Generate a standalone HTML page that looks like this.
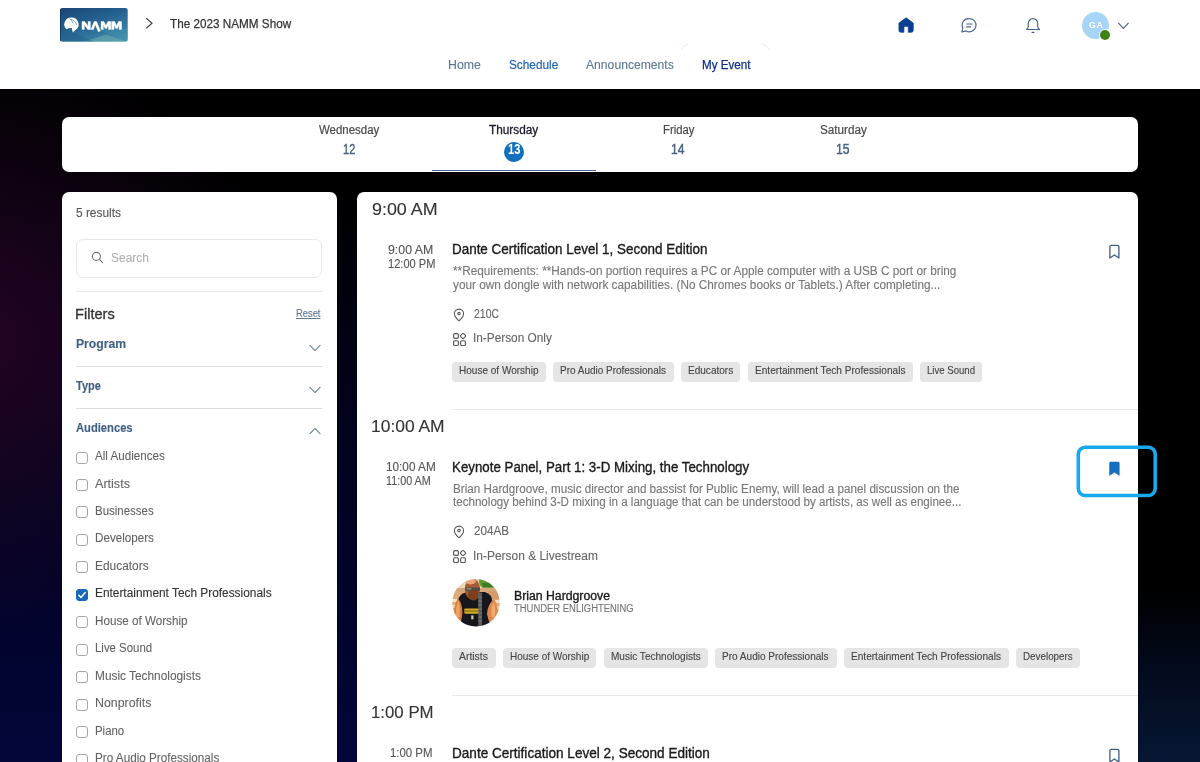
<!DOCTYPE html>
<html>
<head>
<meta charset="utf-8">
<title>The 2023 NAMM Show</title>
<style>
*{box-sizing:border-box;margin:0;padding:0}
html,body{width:1200px;height:762px;overflow:hidden}
body{font-family:"Liberation Sans",sans-serif;position:relative;background:#000;color:#333}
.abs{position:absolute}
.t{position:absolute;white-space:nowrap;line-height:1;transform-origin:0 0}
#bg{position:absolute;left:0;top:88px;width:1200px;height:674px;
 background:
  radial-gradient(ellipse 330px 300px at -40px 250px, rgba(40,4,34,0.95) 0%, rgba(30,4,34,0.6) 45%, rgba(0,0,0,0) 100%),
  linear-gradient(to bottom, rgba(3,5,60,0) 0%, rgba(3,5,60,0) 14%, rgba(3,5,60,0.5) 52%, rgba(3,5,60,0.95) 100%),
  #000;}
#bgr{position:absolute;left:1100px;top:88px;width:100px;height:674px;
 background:linear-gradient(to bottom, #000 0%, #000 74%, #030a1c 86%, #071633 100%);}
#hdr{position:absolute;left:0;top:0;width:1200px;height:89.2px;background:#fff}
.card{position:absolute;background:#fff;border-radius:7px}
.sep{position:absolute;height:1px;background:#e9e9e9}
.cb{position:absolute;left:76px;width:12px;height:12px;border:1px solid #a6a6a6;border-radius:3px;background:#fff}
.tag{position:absolute;height:20px;background:#e5e5e5;border-radius:4px}
</style>
</head>
<body>
<div id="bg"></div>
<div id="bgr"></div>

<div id="hdr"></div>
<!-- logo -->
<svg class="abs" style="left:60.1px;top:8.3px" width="68" height="34" viewBox="0 0 68 34">
  <defs>
    <linearGradient id="lg" x1="0" y1="0" x2="1" y2="0.9">
      <stop offset="0" stop-color="#1a4572"/>
      <stop offset="0.55" stop-color="#27679a"/>
      <stop offset="1" stop-color="#4593b0"/>
    </linearGradient>
    <linearGradient id="lg2" x1="0" y1="0" x2="0" y2="1">
      <stop offset="0" stop-color="#1a4572" stop-opacity="0.25"/>
      <stop offset="1" stop-color="#3f8fa8" stop-opacity="0.35"/>
    </linearGradient>
    <clipPath id="lc"><rect x="0" y="0" width="67.8" height="33.7" rx="2.6"/></clipPath>
  </defs>
  <g clip-path="url(#lc)">
  <rect x="0" y="0" width="67.8" height="33.7" fill="url(#lg)"/>
  <rect x="0" y="0" width="67.8" height="33.7" fill="url(#lg2)"/>
  <path d="M24 33.7 L46 26.5 L67.8 33.7 Z" fill="#7fb8ac" opacity="0.45"/>
  <path d="M38 22 L67.8 32 V20 Z" fill="#4a9ab8" opacity="0.25"/>
  <path d="M0 18 L34 33.7 H0 Z" fill="#1d5578" opacity="0.35"/>
  <rect x="0" y="0" width="1" height="33.7" fill="#0e2a5a" opacity="0.6"/>
  <path d="M11.7 9.4 a6.9 6.9 0 0 1 3.4 12.9 q-1.6 1.4 -2 2.4 q-1.4 -2.6 -1.2 -4.6 q-2.8 -0.6 -5.4 1.2 A6.9 6.9 0 0 1 11.7 9.4 Z" fill="#fff"/>
  <path d="M9.2 10 q3.2 2 3.6 5.4 M10.4 11.4 q4.6 0.6 6.4 5.6" stroke="#2a5f8e" stroke-width="0.5" fill="none"/>
  <g fill="#fff" stroke="#fff" stroke-width="0.45" stroke-linejoin="round">
    <path d="M22 21.4 V13.6 H24.7 L28.1 18.2 V13.6 H30.4 V21.4 H27.8 L24.3 16.8 V21.4 Z"/>
    <path d="M31 21.4 L34.1 13.6 H36.6 L40.4 22.9 L38.3 23.7 L35.2 16.5 L33.5 21.4 Z"/>
    <path d="M41.0 21.4 L41.0 13.6 L43.9 13.6 L45.9 17.7 L47.9 13.6 L50.8 13.6 L50.8 21.4 L48.5 21.4 L48.5 16.8 L46.7 20.6 L45.1 20.6 L43.3 16.8 L43.3 21.4 Z"/>
    <path d="M51.7 21.4 L51.7 13.6 L54.6 13.6 L56.6 17.7 L58.6 13.6 L61.5 13.6 L61.5 21.4 L59.2 21.4 L59.2 16.8 L57.4 20.6 L55.8 20.6 L54.0 16.8 L54.0 21.4 Z"/>
  </g>
  </g>
</svg>
<!-- chevron -->
<svg class="abs" style="left:144px;top:16px" width="10" height="14" viewBox="0 0 10 14"><path d="M2.3 2.2 L8 7.2 L2.3 12.2" stroke="#444" stroke-width="1.2" fill="none"/></svg>
<svg class="abs" style="left:678px;top:42px" width="96" height="14" viewBox="0 0 96 14"><path d="M3 8.5 Q4.5 3.5 10 2.2 M85 2.2 Q90.5 3.8 92 9" fill="none" stroke="#ff9a78" stroke-opacity="0.35" stroke-width="0.8"/></svg>
<div class="t" style="left:169.62px;top:17.0px;font-size:13px;color:#333;-webkit-text-stroke:0.25px #333;transform:scaleX(0.9018)">The 2023 NAMM Show</div>
<div class="t" style="left:448.11px;top:58.3px;font-size:13px;color:#5d7894;-webkit-text-stroke:0.12px #5d7894;transform:scaleX(0.9472)">Home</div>
<div class="t" style="left:508.70px;top:58.3px;font-size:13px;color:#1d63b8;-webkit-text-stroke:0.2px #1d63b8;transform:scaleX(0.9078)">Schedule</div>
<div class="t" style="left:585.66px;top:58.3px;font-size:13px;color:#5d7894;-webkit-text-stroke:0.12px #5d7894;transform:scaleX(0.9347)">Announcements</div>
<div class="t" style="left:701.53px;top:58.3px;font-size:13px;color:#0b2e86;-webkit-text-stroke:0.25px #0b2e86;transform:scaleX(0.8951)">My Event</div>
<!-- home icon -->
<svg class="abs" style="left:897.7px;top:17.3px" width="16.2" height="16.2" viewBox="0 0 17 17"><path d="M8.5 0.8 L1 6.4 V14 a2 2 0 0 0 2 2 H6.2 V11 a1.2 1.2 0 0 1 1.2 -1.2 h2.2 a1.2 1.2 0 0 1 1.2 1.2 V16 H14 a2 2 0 0 0 2 -2 V6.4 Z" fill="#0c3f93" stroke="#0c3f93" stroke-width="0.8" stroke-linejoin="round"/></svg>
<!-- chat icon -->
<svg class="abs" style="left:960px;top:17px" width="18" height="17" viewBox="0 0 18 17"><path d="M9.4 1.6 a6.6 6.6 0 1 1 -3.3 12.3 L1.8 15 L2.9 11.2 A6.6 6.6 0 0 1 9.4 1.6 Z" fill="none" stroke="#466488" stroke-width="1.15" stroke-linejoin="round"/><path d="M6.8 7 H12.2 M6.8 9.8 H10.4" stroke="#466488" stroke-width="1.15" stroke-linecap="round"/></svg>
<!-- bell icon -->
<svg class="abs" style="left:1024px;top:17px" width="18" height="18" viewBox="0 0 18 18"><path d="M9 1.6 a4.7 4.7 0 0 0 -4.7 4.7 v3.2 c0 1.2 -0.8 2.2 -1.8 3 h13 c-1 -0.8 -1.8 -1.8 -1.8 -3 V6.3 A4.7 4.7 0 0 0 9 1.6 Z" fill="none" stroke="#466488" stroke-width="1.15" stroke-linejoin="round"/><path d="M8.2 15.4 h1.6" stroke="#3f5f85" stroke-width="1.4" stroke-linecap="round"/></svg>
<!-- avatar -->
<div class="abs" style="left:1082.1px;top:11.6px;width:27.2px;height:27.2px;border-radius:50%;background:#a8d4f8"></div>
<div class="t" style="left:1089.3px;top:20.2px;font-size:9.4px;font-weight:bold;color:#fff;letter-spacing:0.8px;line-height:1;transform:scaleX(0.93)">GA</div>
<div class="abs" style="left:1098.5px;top:28.5px;width:13px;height:13px;border-radius:50%;background:#fff"></div>
<div class="abs" style="left:1099.85px;top:29.85px;width:10.3px;height:10.3px;border-radius:50%;background:#3f8214"></div>
<svg class="abs" style="left:1116px;top:20px" width="16" height="12" viewBox="0 0 16 12"><path d="M2.2 2.8 L7.4 8.3 L12.6 2.8" stroke="#4f6580" stroke-width="1.15" fill="none"/></svg>

<!-- date bar -->
<div class="card" style="left:62px;top:117px;width:1076px;height:54.6px;border-radius:7px"></div>
<div class="abs" style="left:503.9px;top:142px;width:20.3px;height:20.3px;border-radius:50%;background:#1270be"></div>
<div class="abs" style="left:431.7px;top:170.2px;width:164.5px;height:1.2px;background:#4a62a8"></div>
<div class="t" style="left:319.10px;top:124.1px;font-size:12px;color:#4a4a4a;-webkit-text-stroke:0.2px #4a4a4a;transform:scaleX(0.9548)">Wednesday</div>
<div class="t" style="left:342.76px;top:141.8px;font-size:14.5px;color:#4a6482;-webkit-text-stroke:0.45px #4a6482;transform:scaleX(0.7601)">12</div>
<div class="t" style="left:489.45px;top:124.2px;font-size:12px;color:#1c1c2c;-webkit-text-stroke:0.3px #1c1c2c;transform:scaleX(0.9836)">Thursday</div>
<div class="t" style="left:507.80px;top:141.6px;font-size:14.5px;color:#fff;font-weight:bold;transform:scaleX(0.7657)">13</div>
<div class="t" style="left:663.00px;top:124.1px;font-size:12px;color:#4a4a4a;-webkit-text-stroke:0.2px #4a4a4a;transform:scaleX(0.9448)">Friday</div>
<div class="t" style="left:671.39px;top:141.8px;font-size:14.5px;color:#4a6482;-webkit-text-stroke:0.45px #4a6482;transform:scaleX(0.8331)">14</div>
<div class="t" style="left:819.90px;top:124.1px;font-size:12px;color:#4a4a4a;-webkit-text-stroke:0.2px #4a4a4a;transform:scaleX(0.9765)">Saturday</div>
<div class="t" style="left:836.19px;top:141.8px;font-size:14.5px;color:#4a6482;-webkit-text-stroke:0.45px #4a6482;transform:scaleX(0.8397)">15</div>

<!-- sidebar -->
<div class="card" style="left:62px;top:192px;width:274.8px;height:600px"></div>
<div class="abs" style="left:76px;top:239px;width:246px;height:39px;border:1px solid #e8e8e8;border-radius:7px;background:#fff"></div>
<svg class="abs" style="left:90.5px;top:250.7px" width="14" height="14" viewBox="0 0 14 14"><circle cx="5.4" cy="5.4" r="4" fill="none" stroke="#707070" stroke-width="1.1"/><path d="M8.4 8.4 L11.6 11.6" stroke="#707070" stroke-width="1.1" stroke-linecap="round"/></svg>
<div class="sep" style="left:76px;top:291.2px;width:246px"></div>
<svg class="abs" style="left:308.3px;top:342.7px" width="14" height="10" viewBox="0 0 14 10"><path d="M1.6 2 L7 7.6 L12.4 2" stroke="#56708f" stroke-width="1.05" fill="none"/></svg>
<div class="sep" style="left:76px;top:365.7px;width:246px;background:#dcdcdc"></div>
<svg class="abs" style="left:308.3px;top:384.7px" width="14" height="10" viewBox="0 0 14 10"><path d="M1.6 2 L7 7.6 L12.4 2" stroke="#56708f" stroke-width="1.05" fill="none"/></svg>
<div class="sep" style="left:76px;top:407.9px;width:246px;background:#dcdcdc"></div>
<svg class="abs" style="left:308.3px;top:426px" width="14" height="10" viewBox="0 0 14 10"><path d="M1.6 8 L7 2.4 L12.4 8" stroke="#56708f" stroke-width="1.05" fill="none"/></svg>
<div class="t" style="left:76.36px;top:206.6px;font-size:12.5px;color:#555;-webkit-text-stroke:0.12px #555;transform:scaleX(0.9508)">5 results</div>
<div class="t" style="left:110.96px;top:251.0px;font-size:13px;color:#b0b0b0;-webkit-text-stroke:0.12px #b0b0b0;transform:scaleX(0.9199)">Search</div>
<div class="t" style="left:75.41px;top:306.8px;font-size:14px;color:#333;-webkit-text-stroke:0.3px #333;transform:scaleX(1.0428)">Filters</div>
<div class="t" style="left:296.16px;top:308.2px;font-size:11px;color:#5d7894;-webkit-text-stroke:0.12px #5d7894;transform:scaleX(0.8501);text-decoration:underline">Reset</div>
<div class="t" style="left:76.36px;top:338.0px;font-size:12px;color:#3f5f85;font-weight:bold;-webkit-text-stroke:0.12px #3f5f85;transform:scaleX(1.0144)">Program</div>
<div class="t" style="left:76.36px;top:380.0px;font-size:12px;color:#3f5f85;font-weight:bold;-webkit-text-stroke:0.12px #3f5f85;transform:scaleX(0.9139)">Type</div>
<div class="t" style="left:76.36px;top:422.0px;font-size:12px;color:#3f5f85;font-weight:bold;-webkit-text-stroke:0.12px #3f5f85;transform:scaleX(0.9323)">Audiences</div>
<div class="cb" style="top:451.5px"></div>
<div class="t" style="left:95.04px;top:450.0px;font-size:12px;color:#626262;-webkit-text-stroke:0.08px #626262;transform:scaleX(0.9685)">All Audiences</div>
<div class="cb" style="top:478.9px"></div>
<div class="t" style="left:95.04px;top:477.5px;font-size:12px;color:#626262;-webkit-text-stroke:0.08px #626262;transform:scaleX(1.0476)">Artists</div>
<div class="cb" style="top:506.4px"></div>
<div class="t" style="left:95.04px;top:504.9px;font-size:12px;color:#626262;-webkit-text-stroke:0.08px #626262;transform:scaleX(0.9569)">Businesses</div>
<div class="cb" style="top:533.9px"></div>
<div class="t" style="left:95.04px;top:532.4px;font-size:12px;color:#626262;-webkit-text-stroke:0.08px #626262;transform:scaleX(0.9707)">Developers</div>
<div class="cb" style="top:561.3px"></div>
<div class="t" style="left:95.04px;top:559.8px;font-size:12px;color:#626262;-webkit-text-stroke:0.08px #626262;transform:scaleX(0.9924)">Educators</div>
<div class="cb" style="top:588.8px;background:#1668b8;border-color:#1668b8"></div>
<svg class="abs" style="left:76px;top:588.8px" width="12" height="12" viewBox="0 0 12 12"><path d="M2.8 6.2 L5 8.4 L9.2 3.6" stroke="#fff" stroke-width="1.5" fill="none" stroke-linecap="round" stroke-linejoin="round"/></svg>
<div class="t" style="left:95.06px;top:587.3px;font-size:12px;color:#333;-webkit-text-stroke:0.12px #333;transform:scaleX(0.9889)">Entertainment Tech Professionals</div>
<div class="cb" style="top:616.2px"></div>
<div class="t" style="left:95.04px;top:614.7px;font-size:12px;color:#626262;-webkit-text-stroke:0.08px #626262;transform:scaleX(0.9721)">House of Worship</div>
<div class="cb" style="top:643.6px"></div>
<div class="t" style="left:95.04px;top:642.2px;font-size:12px;color:#626262;-webkit-text-stroke:0.08px #626262;transform:scaleX(0.9503)">Live Sound</div>
<div class="cb" style="top:671.1px"></div>
<div class="t" style="left:95.04px;top:669.6px;font-size:12px;color:#626262;-webkit-text-stroke:0.08px #626262;transform:scaleX(0.9883)">Music Technologists</div>
<div class="cb" style="top:698.5px"></div>
<div class="t" style="left:95.04px;top:697.1px;font-size:12px;color:#626262;-webkit-text-stroke:0.08px #626262;transform:scaleX(1.0316)">Nonprofits</div>
<div class="cb" style="top:726.0px"></div>
<div class="t" style="left:95.04px;top:724.5px;font-size:12px;color:#626262;-webkit-text-stroke:0.08px #626262;transform:scaleX(0.9517)">Piano</div>
<div class="cb" style="top:753.5px"></div>
<div class="t" style="left:95.04px;top:752.0px;font-size:12px;color:#626262;-webkit-text-stroke:0.08px #626262;transform:scaleX(0.9754)">Pro Audio Professionals</div>

<!-- main -->
<div class="card" style="left:357px;top:192px;width:780.8px;height:600px"></div>
<div class="t" style="left:371.56px;top:200.6px;font-size:17px;color:#333;-webkit-text-stroke:0.12px #333;transform:scaleX(1.0520)">9:00 AM</div>
<div class="t" style="left:388.06px;top:243.5px;font-size:12px;color:#555;-webkit-text-stroke:0.12px #555;transform:scaleX(1.0266)">9:00 AM</div>
<div class="t" style="left:387.56px;top:257.5px;font-size:12px;color:#555;-webkit-text-stroke:0.12px #555;transform:scaleX(0.9224)">12:00 PM</div>
<div class="t" style="left:451.72px;top:242.4px;font-size:14px;color:#1a1a1a;-webkit-text-stroke:0.35px #1a1a1a;transform:scaleX(0.9594)">Dante Certification Level 1, Second Edition</div>
<div class="t" style="left:452.56px;top:265.3px;font-size:12px;color:#777;-webkit-text-stroke:0.12px #777;transform:scaleX(0.9827)">**Requirements: **Hands-on portion requires a PC or Apple computer with a USB C port or bring</div>
<div class="t" style="left:452.56px;top:279.0px;font-size:12px;color:#777;-webkit-text-stroke:0.12px #777;transform:scaleX(0.9825)">your own dongle with network capabilities. (No Chromes books or Tablets.) After completing...</div>
<svg class="abs" style="left:453.1px;top:308.1px" width="12" height="14" viewBox="0 0 12 14"><path d="M6 1.1 a4.6 4.6 0 0 0 -4.6 4.6 c0 3.1 4.6 7.1 4.6 7.1 s4.6 -4 4.6 -7.1 A4.6 4.6 0 0 0 6 1.1 Z" fill="none" stroke="#555" stroke-width="1.05"/><circle cx="6" cy="5.6" r="1.25" fill="none" stroke="#555" stroke-width="1.05"/></svg>
<div class="t" style="left:473.56px;top:308.0px;font-size:12px;color:#666;-webkit-text-stroke:0.12px #666;transform:scaleX(0.8745)">210C</div>
<svg class="abs" style="left:452.7px;top:332.7px" width="14" height="14" viewBox="0 0 14 14"><rect x="0.6" y="0.6" width="4.8" height="4.8" rx="1.3" fill="none" stroke="#555" stroke-width="1.15"/><rect x="7.9" y="0.9" width="4.2" height="4.2" rx="1.2" transform="rotate(45 10 3)" fill="none" stroke="#555" stroke-width="1.1"/><rect x="0.6" y="7.7" width="4.8" height="4.8" rx="1.3" fill="none" stroke="#555" stroke-width="1.15"/><rect x="7.6" y="7.7" width="4.8" height="4.8" rx="1.3" fill="none" stroke="#555" stroke-width="1.15"/></svg>
<div class="t" style="left:472.57px;top:332.3px;font-size:12px;color:#666;-webkit-text-stroke:0.12px #666;transform:scaleX(0.9854)">In-Person Only</div>
<div class="tag" style="left:452px;top:361.7px;width:93.5px"></div>
<div class="t" style="left:459.06px;top:364.7px;font-size:11px;color:#444;-webkit-text-stroke:0.12px #444;transform:scaleX(0.9113)">House of Worship</div>
<div class="tag" style="left:552.5px;top:361.7px;width:121.0px"></div>
<div class="t" style="left:559.56px;top:364.7px;font-size:11px;color:#444;-webkit-text-stroke:0.12px #444;transform:scaleX(0.9066)">Pro Audio Professionals</div>
<div class="tag" style="left:680.7px;top:361.7px;width:59.8px"></div>
<div class="t" style="left:687.76px;top:364.7px;font-size:11px;color:#444;-webkit-text-stroke:0.12px #444;transform:scaleX(0.9131)">Educators</div>
<div class="tag" style="left:747.5px;top:361.7px;width:165.2px"></div>
<div class="t" style="left:754.56px;top:364.7px;font-size:11px;color:#444;-webkit-text-stroke:0.12px #444;transform:scaleX(0.9192)">Entertainment Tech Professionals</div>
<div class="tag" style="left:920px;top:361.7px;width:62.0px"></div>
<div class="t" style="left:927.06px;top:364.7px;font-size:11px;color:#444;-webkit-text-stroke:0.12px #444;transform:scaleX(0.8717)">Live Sound</div>
<svg class="abs" style="left:1108.4px;top:243.9px" width="14" height="16" viewBox="0 0 14 16"><path d="M3 1.4 H9.8 Q10.9 1.4 10.9 2.5 V14 L6.4 11 L1.9 14 V2.5 Q1.9 1.4 3 1.4 Z" fill="none" stroke="#3f5f85" stroke-width="1.3" stroke-linejoin="round"/></svg>
<div class="sep" style="left:452px;top:409px;width:686px"></div>
<div class="t" style="left:370.53px;top:418.1px;font-size:17px;color:#333;-webkit-text-stroke:0.12px #333;transform:scaleX(1.0252)">10:00 AM</div>
<div class="t" style="left:386.06px;top:461.0px;font-size:12px;color:#555;-webkit-text-stroke:0.12px #555;transform:scaleX(0.9808)">10:00 AM</div>
<div class="t" style="left:386.06px;top:475.0px;font-size:12px;color:#555;-webkit-text-stroke:0.12px #555;transform:scaleX(0.8990)">11:00 AM</div>
<div class="t" style="left:451.72px;top:459.7px;font-size:14px;color:#1a1a1a;-webkit-text-stroke:0.35px #1a1a1a;transform:scaleX(0.9506)">Keynote Panel, Part 1: 3-D Mixing, the Technology</div>
<div class="t" style="left:452.56px;top:482.5px;font-size:12px;color:#777;-webkit-text-stroke:0.12px #777;transform:scaleX(0.9729)">Brian Hardgroove, music director and bassist for Public Enemy, will lead a panel discussion on the</div>
<div class="t" style="left:452.56px;top:496.2px;font-size:12px;color:#777;-webkit-text-stroke:0.12px #777;transform:scaleX(0.9659)">technology behind 3-D mixing in a language that can be understood by artists, as well as enginee...</div>
<svg class="abs" style="left:453.1px;top:525.4px" width="12" height="14" viewBox="0 0 12 14"><path d="M6 1.1 a4.6 4.6 0 0 0 -4.6 4.6 c0 3.1 4.6 7.1 4.6 7.1 s4.6 -4 4.6 -7.1 A4.6 4.6 0 0 0 6 1.1 Z" fill="none" stroke="#555" stroke-width="1.05"/><circle cx="6" cy="5.6" r="1.25" fill="none" stroke="#555" stroke-width="1.05"/></svg>
<div class="t" style="left:473.56px;top:525.3px;font-size:12px;color:#666;-webkit-text-stroke:0.12px #666;transform:scaleX(0.9738)">204AB</div>
<svg class="abs" style="left:452.7px;top:550px" width="14" height="14" viewBox="0 0 14 14"><rect x="0.6" y="0.6" width="4.8" height="4.8" rx="1.3" fill="none" stroke="#555" stroke-width="1.15"/><rect x="7.9" y="0.9" width="4.2" height="4.2" rx="1.2" transform="rotate(45 10 3)" fill="none" stroke="#555" stroke-width="1.1"/><rect x="0.6" y="7.7" width="4.8" height="4.8" rx="1.3" fill="none" stroke="#555" stroke-width="1.15"/><rect x="7.6" y="7.7" width="4.8" height="4.8" rx="1.3" fill="none" stroke="#555" stroke-width="1.15"/></svg>
<div class="t" style="left:472.56px;top:549.8px;font-size:12px;color:#666;-webkit-text-stroke:0.12px #666;transform:scaleX(0.9959)">In-Person &amp; Livestream</div>
<svg class="abs" style="left:452px;top:579.3px" width="48" height="48" viewBox="0 0 48 48">
<defs><clipPath id="av"><circle cx="24" cy="23.8" r="23.8"/></clipPath>
<filter id="bl" x="-10%" y="-10%" width="120%" height="120%"><feGaussianBlur stdDeviation="0.65"/></filter></defs>
<g clip-path="url(#av)"><g filter="url(#bl)">
<rect x="-4" y="-4" width="56" height="56" fill="#e0ac7c"/>
<rect x="-4" y="-4" width="56" height="13" fill="#ecd8ba"/>
<rect x="-4" y="9" width="56" height="4" fill="#d9a77c"/>
<path d="M27 -2 H50 V8.5 H30 Q27 6 27 3 Z" fill="#5f9a34"/>
<path d="M30 4 H44 V8.5 H31 Z" fill="#3f7a24"/>
<rect x="-2" y="20" width="9" height="3" fill="#f6e4c8"/><rect x="-2" y="26" width="8" height="3" fill="#f2d8b4"/>
<rect x="41" y="21" width="9" height="3" fill="#f4dcc0"/><rect x="41" y="27" width="9" height="3" fill="#f0d0a8"/>
<rect x="36" y="12" width="12" height="8" fill="#d49a6c"/>
<path d="M6 50 V22 Q7 14.5 15 13 H33 Q40 15 40.5 23 V50 Z" fill="#17191c"/>
<path d="M2.2 43 Q0.6 29 5.6 19.5 Q10.2 23 10.4 34 Q9.6 43 6.6 48 Z" fill="#d6803f"/>
<path d="M4 38 Q3 28 6.6 22 Q8.4 28 7.6 38 Z" fill="#f0a262"/>
<path d="M45.4 42 Q47.4 30 42.6 20.4 Q36 23 35 35 Q36.6 43 39.6 48 Z" fill="#dc8a4c"/>
<path d="M42.6 38 Q44.4 30 41.6 23.6 Q38.6 28 39.6 38 Z" fill="#f2aa6e"/>
<path d="M14.5 14 Q20 27 27 14 Z" fill="#6e3618"/>
<ellipse cx="20.4" cy="10" rx="7.6" ry="10.6" fill="#a55c30"/>
<ellipse cx="21.5" cy="16" rx="5.6" ry="5.4" fill="#7c3f1e"/>
<ellipse cx="18.6" cy="2.6" rx="5.4" ry="2.8" fill="#eaa87c"/>
<path d="M13.2 8.6 H28 V11.4 Q24.6 13 21.4 10.8 Q17 13.4 13.6 11.4 Z" fill="#4c4c4a"/>
<path d="M14.4 9.2 H19.4 V10.6 H14.8 Z" fill="#9a9a94"/>
<rect x="26.2" y="13.6" width="3.8" height="36" fill="#5a5a5a"/>
<path d="M26.2 18 h3.8 M26.2 22 h3.8 M26.2 26 h3.8 M26.2 30 h3.8 M26.2 34 h3.8 M26.2 38 h3.8 M26.2 42 h3.8" stroke="#8a8a88" stroke-width="0.7"/>
<rect x="12.4" y="29.4" width="14" height="5.4" rx="0.8" fill="#d3a824"/>
<path d="M13 32 h13" stroke="#5a4410" stroke-width="0.7"/>
<rect x="19.2" y="36.4" width="2.3" height="3.9" fill="#d2caa8"/>
</g></g></svg>

<div class="t" style="left:514.17px;top:589.8px;font-size:12px;color:#1a1a1a;-webkit-text-stroke:0.35px #1a1a1a;transform:scaleX(1.0209)">Brian Hardgroove</div>
<div class="t" style="left:514.06px;top:603.5px;font-size:10px;color:#777;-webkit-text-stroke:0.12px #777;transform:scaleX(0.9447)">THUNDER ENLIGHTENING</div>
<div class="tag" style="left:452px;top:647.7px;width:43.5px"></div>
<div class="t" style="left:459.06px;top:650.7px;font-size:11px;color:#444;-webkit-text-stroke:0.12px #444;transform:scaleX(0.9460)">Artists</div>
<div class="tag" style="left:503px;top:647.7px;width:93.2px"></div>
<div class="t" style="left:510.06px;top:650.7px;font-size:11px;color:#444;-webkit-text-stroke:0.12px #444;transform:scaleX(0.9078)">House of Worship</div>
<div class="tag" style="left:603.5px;top:647.7px;width:104.5px"></div>
<div class="t" style="left:610.56px;top:650.7px;font-size:11px;color:#444;-webkit-text-stroke:0.12px #444;transform:scaleX(0.9136)">Music Technologists</div>
<div class="tag" style="left:715px;top:647.7px;width:121.7px"></div>
<div class="t" style="left:722.06px;top:650.7px;font-size:11px;color:#444;-webkit-text-stroke:0.12px #444;transform:scaleX(0.9125)">Pro Audio Professionals</div>
<div class="tag" style="left:844px;top:647.7px;width:164.7px"></div>
<div class="t" style="left:851.06px;top:650.7px;font-size:11px;color:#444;-webkit-text-stroke:0.12px #444;transform:scaleX(0.9162)">Entertainment Tech Professionals</div>
<div class="tag" style="left:1016px;top:647.7px;width:64.3px"></div>
<div class="t" style="left:1023.06px;top:650.7px;font-size:11px;color:#444;-webkit-text-stroke:0.12px #444;transform:scaleX(0.8939)">Developers</div>
<svg class="abs" style="left:1108.4px;top:461.3px" width="14" height="16" viewBox="0 0 14 16"><path d="M2.6 1 H10.2 Q11.3 1 11.3 2.1 V14.4 L6.4 11.2 L1.5 14.4 V2.1 Q1.5 1 2.6 1 Z" fill="#1270be" stroke="#1270be" stroke-width="0.5" stroke-linejoin="round"/></svg>
<svg class="abs" style="left:1070px;top:440px" width="94" height="64" viewBox="0 0 94 64"><rect x="8.3" y="7.3" width="76.9" height="48.2" rx="7" fill="none" stroke="#18a8ec" stroke-width="3.6"/></svg>
<div class="sep" style="left:452px;top:695px;width:686px"></div>
<div class="t" style="left:370.77px;top:703.9px;font-size:17px;color:#333;-webkit-text-stroke:0.12px #333;transform:scaleX(0.9891)">1:00 PM</div>
<div class="t" style="left:389.76px;top:747.1px;font-size:12px;color:#555;-webkit-text-stroke:0.12px #555;transform:scaleX(0.9505)">1:00 PM</div>
<div class="t" style="left:451.71px;top:745.8px;font-size:14px;color:#1a1a1a;-webkit-text-stroke:0.35px #1a1a1a;transform:scaleX(0.9689)">Dante Certification Level 2, Second Edition</div>
<svg class="abs" style="left:1108.4px;top:747.5px" width="14" height="16" viewBox="0 0 14 16"><path d="M3 1.4 H9.8 Q10.9 1.4 10.9 2.5 V14 L6.4 11 L1.9 14 V2.5 Q1.9 1.4 3 1.4 Z" fill="none" stroke="#3f5f85" stroke-width="1.3" stroke-linejoin="round"/></svg>

</body>
</html>
